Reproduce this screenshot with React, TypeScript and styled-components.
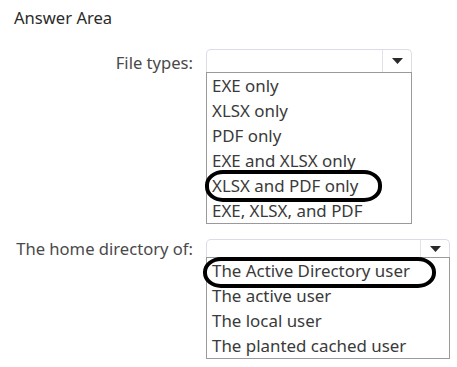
import React from "react";
import styled, { createGlobalStyle } from "styled-components";

const Global = createGlobalStyle`
  html, body { margin: 0; padding: 0; background: #fff; }
  body { font-family: "Noto Sans", "Open Sans", sans-serif; color: #333; }
`;

const Page = styled.div`
  width: 457px;
  height: 367px;
  padding: 7px 0 0 14px;
  box-sizing: border-box;
  overflow: hidden;
`;

const Title = styled.div`
  font-size: 16.6px;
  line-height: 22px;
  color: #2b2b2b;
  margin-bottom: 20px;
`;

const Row = styled.div<{ $gap?: number }>`
  display: grid;
  grid-template-columns: 179px auto;
  column-gap: 13px;
  align-items: start;
  margin-bottom: ${(p) => p.$gap ?? 0}px;
`;

const Label = styled.div<{ $top: number }>`
  text-align: right;
  font-size: 16.6px;
  line-height: 20px;
  color: #4a4a4a;
  padding-top: ${(p) => p.$top}px;
  white-space: nowrap;
`;

const Dropdown = styled.div<{ $w: number }>`
  width: ${(p) => p.$w}px;
  display: flex;
  flex-direction: column;
`;

const Select = styled.div<{ $h: number }>`
  height: ${(p) => p.$h}px;
  border: 1px solid #dcdce8;
  border-bottom: none;
  border-radius: 5px 5px 0 0;
  display: flex;
  justify-content: flex-end;
  box-sizing: border-box;
`;

const ArrowBox = styled.div`
  width: 28px;
  border-left: 1px solid #e2e2ea;
  display: flex;
  align-items: center;
  justify-content: center;
`;

const List = styled.div`
  border: 1px solid #9a9a9a;
  display: flex;
  flex-direction: column;
`;

const Item = styled.div`
  position: relative;
  height: 25px;
  line-height: 25px;
  padding-left: 5px;
  font-size: 16.9px;
  color: #3a3a3a;
  white-space: nowrap;
`;

const Ring = styled.div<{ $l: number; $t: number; $w: number; $h: number }>`
  position: absolute;
  left: ${(p) => p.$l}px;
  top: ${(p) => p.$t}px;
  width: ${(p) => p.$w}px;
  height: ${(p) => p.$h}px;
  border: 4px solid #000;
  border-radius: 18px / 15px;
  box-sizing: border-box;
  pointer-events: none;
`;

const Arrow = () => (
  <svg width="11" height="6" viewBox="0 0 11 6">
    <path d="M0 0 L11 0 L5.5 6 Z" fill="#2a2a2a" />
  </svg>
);

export default function App() {
  return (
    <Page>
      <Global />
      <Title>Answer Area</Title>
      <Row $gap={15}>
        <Label $top={4}>File types:</Label>
        <Dropdown $w={206}>
          <Select $h={23}>
            <ArrowBox>
              <Arrow />
            </ArrowBox>
          </Select>
          <List>
            <Item>EXE only</Item>
            <Item>XLSX only</Item>
            <Item>PDF only</Item>
            <Item>EXE and XLSX only</Item>
            <Item>
              XLSX and PDF only
              <Ring $l={-2} $t={-3} $w={177} $h={32} />
            </Item>
            <Item>EXE, XLSX, and PDF</Item>
          </List>
        </Dropdown>
      </Row>
      <Row>
        <Label $top={0}>The home directory of:</Label>
        <Dropdown $w={244}>
          <Select $h={18}>
            <ArrowBox>
              <Arrow />
            </ArrowBox>
          </Select>
          <List>
            <Item>
              The Active Directory user
              <Ring $l={-4} $t={-1} $w={233} $h={31} />
            </Item>
            <Item>The active user</Item>
            <Item>The local user</Item>
            <Item>The planted cached user</Item>
          </List>
        </Dropdown>
      </Row>
    </Page>
  );
}
